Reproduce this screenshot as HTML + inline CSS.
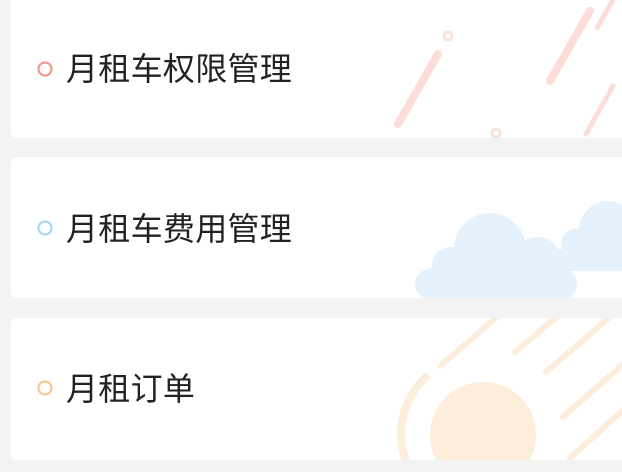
<!DOCTYPE html>
<html><head><meta charset="utf-8"><style>
html,body{margin:0;padding:0;width:622px;height:472px;overflow:hidden;background:#f3f3f3;}
svg{position:absolute;left:0;top:0;}
.t{position:absolute;left:66px;font:32px "Liberation Sans","Noto Sans CJK SC",sans-serif;color:#222;line-height:40px;white-space:nowrap;letter-spacing:0.3px;}
</style></head><body>
<svg width="622" height="472" viewBox="0 0 622 472">
<defs>
<clipPath id="c1"><rect x="11" y="-10" width="620" height="148" rx="6"/></clipPath>
<clipPath id="c2"><rect x="11" y="157" width="620" height="141" rx="6"/></clipPath>
<clipPath id="c3"><rect x="11" y="318" width="620" height="142" rx="6"/></clipPath>
</defs>
<rect x="11" y="-10" width="620" height="148" rx="6" fill="#fff"/>
<rect x="11" y="157" width="620" height="141" rx="6" fill="#fff"/>
<rect x="11" y="318" width="620" height="142" rx="6" fill="#fff"/>
<g clip-path="url(#c1)" stroke="#fdddd7" stroke-linecap="round" fill="none">
<line x1="398" y1="124" x2="438" y2="54" stroke-width="8"/>
<line x1="550" y1="81" x2="590" y2="11" stroke-width="8"/>
<line x1="597" y1="28" x2="613" y2="0" stroke-width="5"/>
<line x1="586" y1="134" x2="613" y2="86" stroke-width="5"/>
<circle cx="448" cy="36" r="4" stroke-width="2.5"/>
<circle cx="496" cy="133" r="4" stroke-width="2.5"/>
</g>
<g clip-path="url(#c2)" fill="#e3f2fd">
<circle cx="608" cy="230" r="29"/>
<circle cx="575" cy="243" r="14"/>
<circle cx="561" cy="260" r="11"/>
<rect x="561" y="249" width="70" height="22"/>
<circle cx="490" cy="249" r="36"/>
<circle cx="450" cy="265" r="18"/>
<circle cx="537" cy="262" r="25"/>
<circle cx="430" cy="284" r="15"/>
<circle cx="561" cy="284" r="16"/>
<rect x="430" y="268" width="131" height="35"/>
</g>
<g clip-path="url(#c3)" stroke="#fdeddb" stroke-linecap="round" fill="none" stroke-width="6">
<line x1="440" y1="366" x2="505" y2="310"/>
<line x1="515" y1="352" x2="565" y2="310"/>
<line x1="546" y1="372" x2="618" y2="310"/>
<line x1="563" y1="417" x2="630" y2="358"/>
<line x1="570" y1="458" x2="630" y2="404"/>
<path d="M428 375 A78 78 0 0 0 410 470" stroke-width="8" stroke-linecap="butt"/>
<circle cx="483" cy="435" r="53" fill="#fdeddb" stroke="none"/>
</g>
<circle cx="45" cy="69" r="6.5" fill="none" stroke="#f4988a" stroke-width="2.2"/>
<circle cx="45" cy="228" r="6.5" fill="none" stroke="#a8d6f7" stroke-width="2.2"/>
<circle cx="45" cy="388" r="6.5" fill="none" stroke="#f7c98a" stroke-width="2.2"/>
</svg>
<div class="t" style="top:49px">月租车权限管理</div>
<div class="t" style="top:209px">月租车费用管理</div>
<div class="t" style="top:369px">月租订单</div>
</body></html>
